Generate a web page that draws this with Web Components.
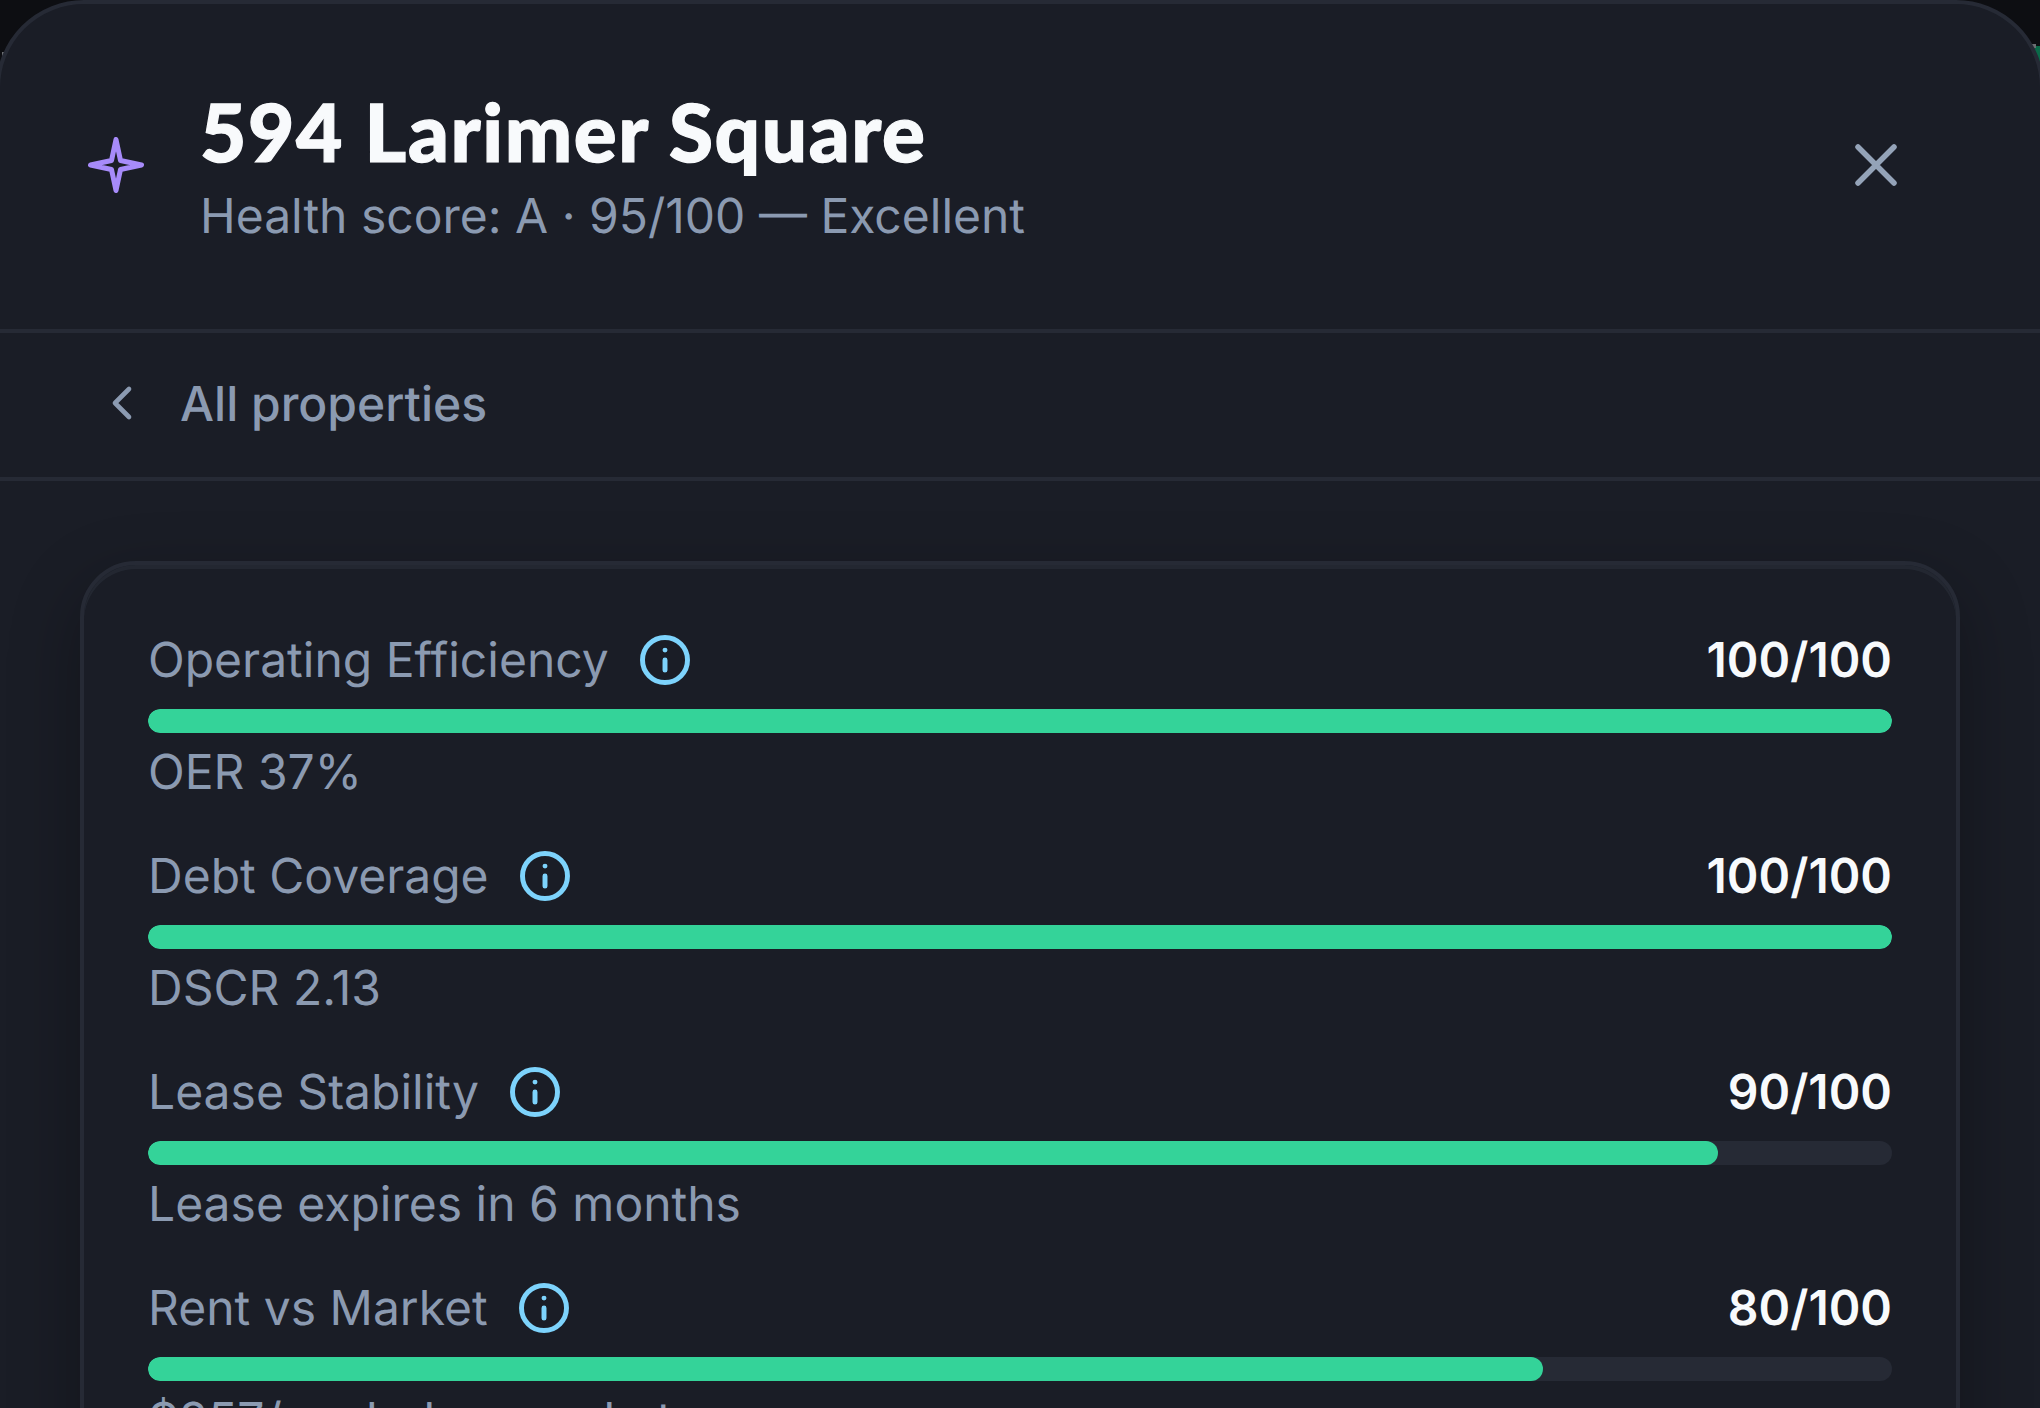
<!DOCTYPE html>
<html lang="en">
<head>
<meta charset="utf-8">
<title>594 Larimer Square</title>
<style>
  html, body { margin: 0; height: 1408px; overflow: hidden; background: #0d0e12; }
  body { font-family: Inter, "Liberation Sans", sans-serif; text-rendering: geometricPrecision; }
</style>
</head>
<body>
<health-sheet>
  <sheet-header title="594 Larimer Square" subtitle="Health score: A · 95/100 — Excellent"></sheet-header>
  <back-row label="All properties"></back-row>
  <score-card>
    <score-row label="Operating Efficiency" score="100" note="OER 37%"></score-row>
    <score-row label="Debt Coverage" score="100" note="DSCR 2.13"></score-row>
    <score-row label="Lease Stability" score="90" note="Lease expires in 6 months"></score-row>
    <score-row label="Rent vs Market" score="80" note="$257/mo below market"></score-row>
  </score-card>
</health-sheet>

<script>
// Bottom sheet, sits over the dimmed page behind it
class HealthSheet extends HTMLElement {
  constructor() {
    super();
    this.attachShadow({ mode: 'open' });
    this.shadowRoot.innerHTML = `
      <style>
        :host { display: block; position: relative; height: 1408px; overflow: hidden; background: #0d0e12; }
        .behind { position: absolute; right: 0; top: 46px; width: 6px; height: 120px; background: #0b6a49; }
        .speck { position: absolute; width: 4px; height: 4px; background: #6b6e72; }
        .speck.l { left: 2px; top: 52px; }
        .speck.r { right: 4px; top: 44px; }
        .panel {
          position: relative;
          margin: 0 -4px;
          height: 1500px;
          box-sizing: border-box;
          background: #1a1d26;
          border: 4px solid #262a35;
          border-radius: 88px 88px 0 0;
        }
      </style>
      <div class="behind"></div>
      <div class="speck l"></div>
      <div class="speck r"></div>
      <div class="panel"><slot></slot></div>
    `;
  }
}

class SheetHeader extends HTMLElement {
  constructor() {
    super();
    this.attachShadow({ mode: 'open' });
  }

  connectedCallback() {
    this.shadowRoot.innerHTML = `
      <style>
        :host {
          display: flex;
          align-items: center;
          box-sizing: content-box;
          height: 321px;
          padding: 0 143px 4px 88px;
          border-bottom: 4px solid #262a35;
        }
        .star { width: 56px; height: 56px; flex: none; margin-right: 56px; }
        .text { flex: 1; padding-top: 2px; }
        h1 {
          margin: 0;
          font: 900 80px/96px Lato, "Liberation Sans", sans-serif;
          letter-spacing: 1.6px;
          -webkit-text-stroke: 1.2px #f8fafc;
          color: #f8fafc;
        }
        p {
          margin: 4px 0 0;
          font: 400 48px/64px Inter, sans-serif;
          color: #8b9ab1;
        }
        .close { width: 42px; height: 42px; flex: none; }
      </style>
      <svg class="star" viewBox="0 0 56 56" fill="none" stroke="#a78bfa" stroke-width="5" stroke-linejoin="round">
        <path d="M28 2.5 32.5 23.5 53.5 28 32.5 32.5 28 53.5 23.5 32.5 2.5 28 23.5 23.5Z"/>
      </svg>
      <div class="text">
        <h1>${this.getAttribute('title')}</h1>
        <p>${this.getAttribute('subtitle')}</p>
      </div>
      <svg class="close" viewBox="0 0 42 42" fill="none" stroke="#94a3b8" stroke-width="5.5" stroke-linecap="round">
        <path d="M3 3 39 39M39 3 3 39"/>
      </svg>
    `;
  }
}

class BackRow extends HTMLElement {
  constructor() {
    super();
    this.attachShadow({ mode: 'open' });
  }

  connectedCallback() {
    this.shadowRoot.innerHTML = `
      <style>
        :host {
          display: flex;
          align-items: center;
          gap: 30px;
          box-sizing: border-box;
          height: 148px;
          padding: 0 0 4px 94px;
          border-bottom: 4px solid #262a35;
          font: 500 48px/56px Inter, sans-serif;
          color: #8b9ab1;
        }
        svg { width: 56px; height: 56px; flex: none; }
        span { padding-top: 2px; }
      </style>
      <svg viewBox="0 0 24 24" fill="none" stroke="#8b9ab1" stroke-width="2" stroke-linecap="round" stroke-linejoin="round">
        <path d="m15 18-6-6 6-6"/>
      </svg>
      <span>${this.getAttribute('label')}</span>
    `;
  }
}

class ScoreCard extends HTMLElement {
  constructor() {
    super();
    this.attachShadow({ mode: 'open' });
    this.shadowRoot.innerHTML = `
      <style>
        :host {
          display: flex;
          flex-direction: column;
          gap: 40px;
          margin: 80px 80px 0;
          padding: 63px 64px 64px;
          border: 4px solid #262a35;
          border-radius: 56px;
          box-shadow: 0 24px 70px rgba(0, 0, 0, 0.3), inset 0 4px 0 rgba(38, 42, 53, 0.8);
        }
      </style>
      <slot></slot>
    `;
  }
}

class ScoreRow extends HTMLElement {
  constructor() {
    super();
    this.attachShadow({ mode: 'open' });
  }

  connectedCallback() {
    const score = this.getAttribute('score');
    this.shadowRoot.innerHTML = `
      <style>
        :host { display: block; font: 400 48px/64px Inter, sans-serif; color: #8b9ab1; }
        .head { display: flex; align-items: center; height: 64px; }
        .info { width: 54px; height: 54px; margin-left: 29px; flex: none; }
        .value { margin-left: auto; font-weight: 600; color: #f8fafc; }
        .track { height: 24px; margin-top: 17px; border-radius: 12px; background: #262a35; overflow: hidden; }
        .fill { height: 100%; border-radius: 12px; background: #34d399; }
        .note { margin-top: 7px; }
      </style>
      <div class="head">
        <span>${this.getAttribute('label')}</span>
        <svg class="info" viewBox="0 0 24 24" fill="none" stroke="#7dd3fc" stroke-width="2.2" stroke-linecap="round" stroke-linejoin="round">
          <circle cx="12" cy="12" r="10"/>
          <path d="M12 16.5v-4.5M12 7.6h.01"/>
        </svg>
        <span class="value">${score}/100</span>
      </div>
      <div class="track"><div class="fill" style="width: ${score}%"></div></div>
      <div class="note">${this.getAttribute('note')}</div>
    `;
  }
}

customElements.define('health-sheet', HealthSheet);
customElements.define('sheet-header', SheetHeader);
customElements.define('back-row', BackRow);
customElements.define('score-card', ScoreCard);
customElements.define('score-row', ScoreRow);
</script>
</body>
</html>
